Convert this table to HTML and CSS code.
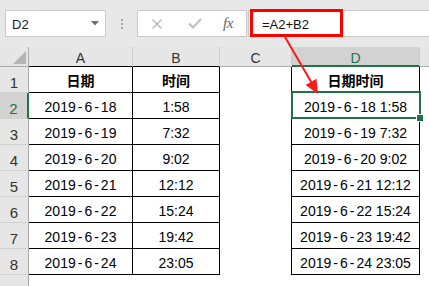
FILE: index.html
```html
<!DOCTYPE html>
<html>
<head>
<meta charset="utf-8">
<link rel="stylesheet" href="styles.css">
</head>
<body>
<div class="app">
  <div class="fbar">
    <div class="namebox">
      <span>D2</span>
      <svg class="dd" width="8" height="5" viewBox="0 0 8 5"><path d="M0 0H8L4 4.5Z" fill="#6f6f6f"/></svg>
    </div>
    <div class="grip"><i></i><i></i><i></i></div>
    <div class="fbtns">
      <svg class="ico-x" width="12" height="12" viewBox="0 0 12 12"><path d="M1.5 1.5L10.5 10.5M10.5 1.5L1.5 10.5" stroke="#bdbdbd" stroke-width="1.6" fill="none"/></svg>
      <svg class="ico-ok" width="14" height="11" viewBox="0 0 14 11"><path d="M1 5.5L5 9.5L13 1" stroke="#bdbdbd" stroke-width="2" fill="none"/></svg>
      <span class="fx">fx</span>
    </div>
    <div class="finput">=A2+B2</div>
  </div>

  <div class="sheet">
    <div class="corner"><svg width="13" height="13" viewBox="0 0 13 13"><path d="M13 0V13H0Z" fill="#b5b5b5"/></svg></div>
    <div class="ch ca">A</div>
    <div class="ch ca">B</div>
    <div class="ch">C</div>
    <div class="ch sel">D</div>
    <div class="ch end"></div>

    <div class="rh">1</div>
    <div class="c b hd">日期</div>
    <div class="c b hd">时间</div>
    <div class="c gap"></div>
    <div class="c b hd">日期时间</div>
    <div class="c e"></div>

    <div class="rh rsel">2</div>
    <div class="c b">2019<span class="d">-</span>6<span class="d">-</span>18</div>
    <div class="c b">1:58</div>
    <div class="c gap"></div>
    <div class="c b active">2019<span class="d">-</span>6<span class="d">-</span>18 1:58</div>
    <div class="c e"></div>

    <div class="rh">3</div>
    <div class="c b">2019<span class="d">-</span>6<span class="d">-</span>19</div>
    <div class="c b">7:32</div>
    <div class="c gap"></div>
    <div class="c b">2019<span class="d">-</span>6<span class="d">-</span>19 7:32</div>
    <div class="c e"></div>

    <div class="rh">4</div>
    <div class="c b">2019<span class="d">-</span>6<span class="d">-</span>20</div>
    <div class="c b">9:02</div>
    <div class="c gap"></div>
    <div class="c b">2019<span class="d">-</span>6<span class="d">-</span>20 9:02</div>
    <div class="c e"></div>

    <div class="rh">5</div>
    <div class="c b">2019<span class="d">-</span>6<span class="d">-</span>21</div>
    <div class="c b">12:12</div>
    <div class="c gap"></div>
    <div class="c b">2019<span class="d">-</span>6<span class="d">-</span>21 12:12</div>
    <div class="c e"></div>

    <div class="rh">6</div>
    <div class="c b">2019<span class="d">-</span>6<span class="d">-</span>22</div>
    <div class="c b">15:24</div>
    <div class="c gap"></div>
    <div class="c b">2019<span class="d">-</span>6<span class="d">-</span>22 15:24</div>
    <div class="c e"></div>

    <div class="rh">7</div>
    <div class="c b">2019<span class="d">-</span>6<span class="d">-</span>23</div>
    <div class="c b">19:42</div>
    <div class="c gap"></div>
    <div class="c b">2019<span class="d">-</span>6<span class="d">-</span>23 19:42</div>
    <div class="c e"></div>

    <div class="rh">8</div>
    <div class="c b">2019<span class="d">-</span>6<span class="d">-</span>24</div>
    <div class="c b">23:05</div>
    <div class="c gap"></div>
    <div class="c b">2019<span class="d">-</span>6<span class="d">-</span>24 23:05</div>
    <div class="c e"></div>

    <div class="rh last"></div>
    <div class="c"></div>
    <div class="c"></div>
    <div class="c"></div>
    <div class="c"></div>
    <div class="c"></div>
  </div>

  <div class="callout"></div>
  <svg class="arrow" width="429" height="286" viewBox="0 0 429 286">
    <line x1="285" y1="37" x2="311.5" y2="82.5" stroke="#ff1a1a" stroke-width="2"/>
    <path d="M318 94L305.6 85L316.4 78.8Z" fill="#ff1a1a"/>
  </svg>
</div>
</body>
</html>
```

FILE: styles.css
```css
* { box-sizing: border-box; }
html, body { margin: 0; padding: 0; background: #fff; }
.app {
  position: relative;
  width: 429px;
  height: 286px;
  overflow: hidden;
  font-family: "Liberation Sans", "Noto Sans CJK SC", sans-serif;
  color: #000;
}
.fbar {
  height: 47px;
  background: #e8e8e8;
  display: flex;
  align-items: flex-start;
  padding-top: 10px;
}
.namebox {
  margin-left: 5px;
  width: 101px;
  height: 27px;
  background: #fff;
  border: 1px solid #c8c8c8;
  display: flex;
  align-items: center;
  justify-content: space-between;
  padding: 0 6px 0 6px;
  font-size: 13px;
  color: #222;
}
.namebox span { padding-top: 1px; }
.grip {
  width: 31px;
  height: 27px;
  display: flex;
  flex-direction: column;
  align-items: center;
  justify-content: center;
  gap: 2px;
}
.grip i {
  display: block;
  width: 2px;
  height: 2px;
  background: #a6a6a6;
}
.fbtns {
  width: 110px;
  height: 27px;
  background: #fff;
  border: 1px solid #c8c8c8;
  display: flex;
  align-items: center;
  padding-left: 13px;
}
.ico-x { margin-right: 24px; }
.ico-ok { margin-right: 21px; margin-left: 1px; }
.fx {
  font-family: "Liberation Serif", serif;
  font-style: italic;
  font-size: 15px;
  color: #666;
  letter-spacing: -0.5px;
}
.finput {
  flex: 1;
  height: 27px;
  margin-left: 1px;
  background: #fff;
  border: 1px solid #c8c8c8;
  border-right: none;
  display: flex;
  align-items: center;
  padding-left: 13px;
  padding-top: 1px;
  font-size: 13px;
  color: #111;
}

.sheet {
  display: grid;
  grid-template-columns: 29px 104px 87px 72px 128px 9px;
  grid-template-rows: 20px repeat(8, 26px) 11px;
}
.corner {
  background: #e6e6e6;
  border-right: 1px solid #ababab;
  border-bottom: 1px solid #ababab;
  display: flex;
  align-items: flex-end;
  justify-content: flex-end;
  padding: 0 2px 2px 0;
}
.ch {
  background: #e6e6e6;
  border-right: 1px solid #cdcdcd;
  border-bottom: 1px solid #ababab;
  display: flex;
  align-items: center;
  justify-content: center;
  padding-top: 3px;
  font-size: 14px;
  color: #333;
}
.ch.ca { border-bottom-color: #000; }
.ch.sel {
  background: #d2d2d2;
  color: #217346;
  border-bottom: 2px solid #217346;
}
.ch.end { border-right: none; }
.rh {
  background: #e6e6e6;
  border-right: 1px solid #ababab;
  border-bottom: 1px solid #d0d0d0;
  display: flex;
  align-items: flex-end;
  justify-content: center;
  padding-bottom: 1px;
  font-size: 15px;
  color: #333;
}
.rh.rsel {
  background: #d2d2d2;
  color: #217346;
  border-right: 2px solid #217346;
}
.rh.last { border-bottom: none; }
.c {
  display: flex;
  align-items: center;
  justify-content: center;
  padding-top: 3px;
  font-size: 14px;
  white-space: nowrap;
}
.c.b {
  border-right: 1px solid #000;
  border-bottom: 1px solid #000;
}
.c.gap { border-right: 1px solid #000; }
.c.hd {
  font-weight: bold;
  font-family: "Noto Sans CJK SC", sans-serif;
  padding-top: 0;
}
.d { margin: 0 2px; }
.active { position: relative; }
.active::after {
  content: "";
  position: absolute;
  top: -2px;
  left: -1px;
  right: -2px;
  bottom: -1px;
  border: 2px solid #217346;
}
.active::before {
  content: "";
  position: absolute;
  right: -5px;
  bottom: -4px;
  width: 6px;
  height: 6px;
  background: #217346;
  border: 1px solid #fff;
  z-index: 2;
}
.callout {
  position: absolute;
  left: 250px;
  top: 9px;
  width: 93px;
  height: 28px;
  border: 3px solid #ff0000;
}
.arrow {
  position: absolute;
  left: 0;
  top: 0;
  pointer-events: none;
}
```
